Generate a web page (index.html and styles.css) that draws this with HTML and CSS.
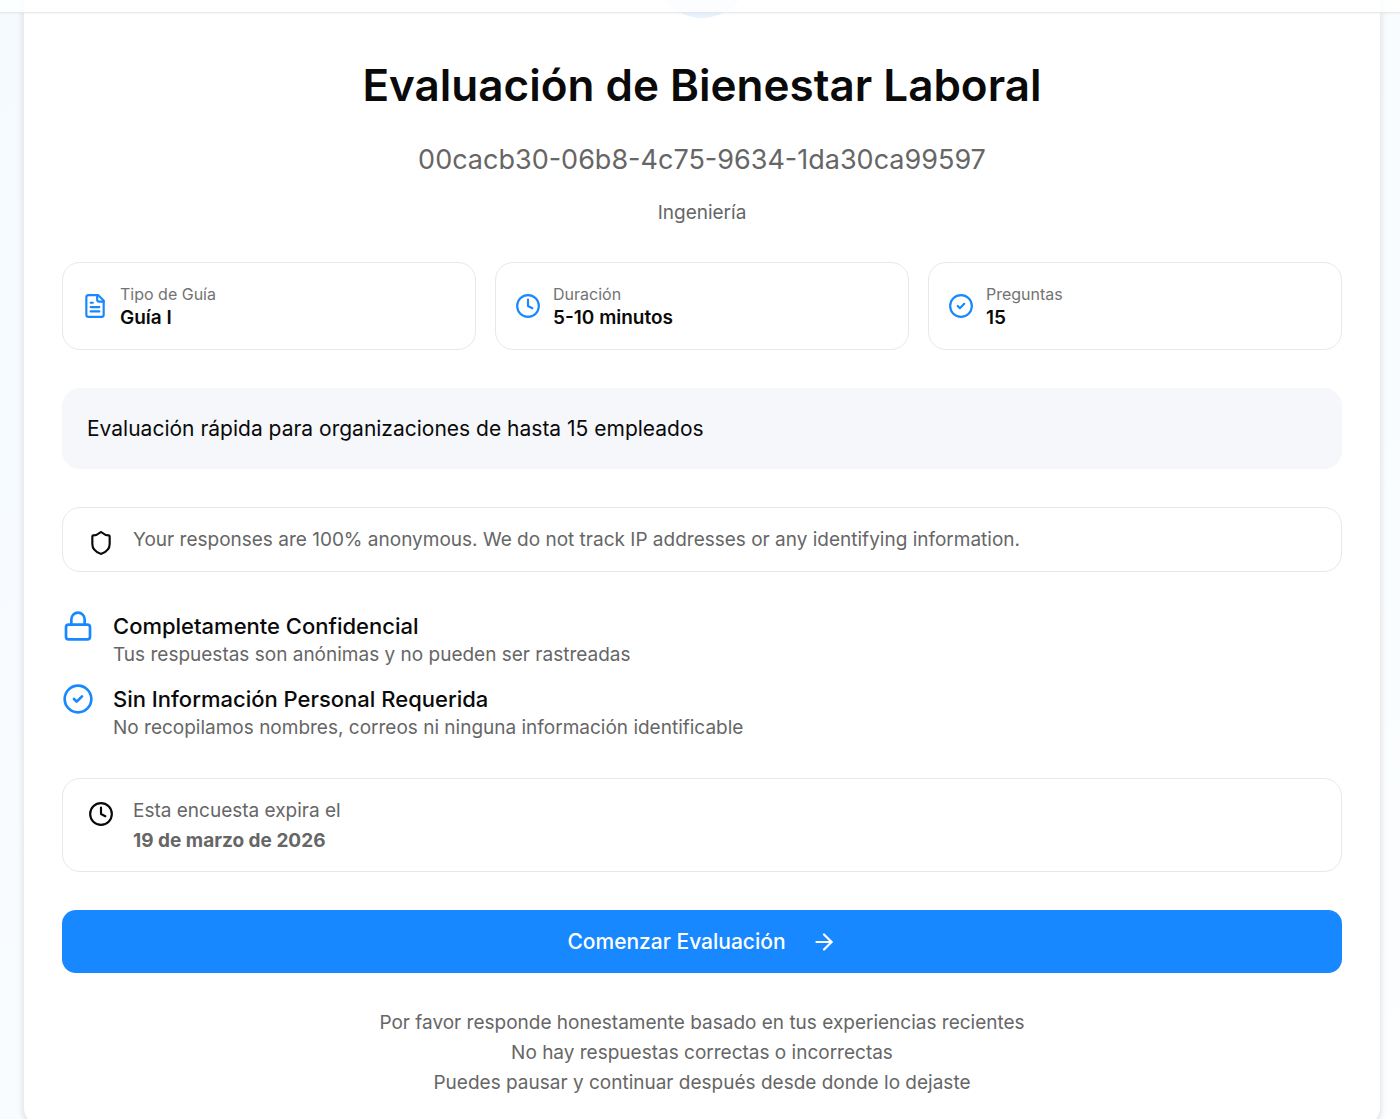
FILE: index.html
```html
<!DOCTYPE html>
<html lang="es">
<head>
    <meta charset="UTF-8">
    <meta name="viewport" content="width=device-width, initial-scale=1.0">
    <title>Evaluación de Bienestar Laboral</title>
    <link rel="stylesheet" href="styles.css">
</head>
<body>

    <header class="topbar"></header>

    <main class="survey-card">
        <div class="intro">
            <div class="intro-badge"></div>
            <h1>Evaluación de Bienestar Laboral</h1>
            <p class="survey-id">00cacb30-06b8-4c75-9634-1da30ca99597</p>
            <p class="department">Ingeniería</p>
        </div>

        <div class="tiles">
            <div class="tile">
                <svg class="icon blue" viewBox="0 0 24 24">
                    <path d="M15 2H6a2 2 0 0 0-2 2v16a2 2 0 0 0 2 2h12a2 2 0 0 0 2-2V7Z"/>
                    <path d="M14 2v4a2 2 0 0 0 2 2h4"/>
                    <path d="M10 9H8"/>
                    <path d="M16 13H8"/>
                    <path d="M16 17H8"/>
                </svg>
                <div>
                    <p class="tile-label">Tipo de Guía</p>
                    <p class="tile-value">Guía I</p>
                </div>
            </div>
            <div class="tile">
                <svg class="icon blue" viewBox="0 0 24 24">
                    <circle cx="12" cy="12" r="10"/>
                    <path d="M12 6v6l4 2"/>
                </svg>
                <div>
                    <p class="tile-label">Duración</p>
                    <p class="tile-value">5-10 minutos</p>
                </div>
            </div>
            <div class="tile">
                <svg class="icon blue" viewBox="0 0 24 24">
                    <circle cx="12" cy="12" r="10"/>
                    <path d="m9 12 2 2 4-4"/>
                </svg>
                <div>
                    <p class="tile-label">Preguntas</p>
                    <p class="tile-value">15</p>
                </div>
            </div>
        </div>

        <p class="description">Evaluación rápida para organizaciones de hasta 15 empleados</p>

        <div class="alert">
            <svg class="icon" viewBox="0 0 24 24">
                <path d="M20 13c0 5-3.5 7.5-7.66 8.95a1 1 0 0 1-.67-.01C7.5 20.5 4 18 4 13V6a1 1 0 0 1 1-1c2 0 4.5-1.2 6.24-2.72a1.17 1.17 0 0 1 1.52 0C14.51 3.81 17 5 19 5a1 1 0 0 1 1 1z"/>
            </svg>
            <p>Your responses are 100% anonymous. We do not track IP addresses or any identifying information.</p>
        </div>

        <ul class="features">
            <li>
                <svg class="icon icon-large blue" viewBox="0 0 24 24">
                    <rect x="3" y="11" width="18" height="11" rx="2"/>
                    <path d="M7 11V7a5 5 0 0 1 10 0v4"/>
                </svg>
                <div>
                    <h2>Completamente Confidencial</h2>
                    <p>Tus respuestas son anónimas y no pueden ser rastreadas</p>
                </div>
            </li>
            <li>
                <svg class="icon icon-large blue" viewBox="0 0 24 24">
                    <circle cx="12" cy="12" r="10"/>
                    <path d="m9 12 2 2 4-4"/>
                </svg>
                <div>
                    <h2>Sin Información Personal Requerida</h2>
                    <p>No recopilamos nombres, correos ni ninguna información identificable</p>
                </div>
            </li>
        </ul>

        <div class="alert">
            <svg class="icon" viewBox="0 0 24 24">
                <circle cx="12" cy="12" r="10"/>
                <path d="M12 6v6l4 2"/>
            </svg>
            <p>Esta encuesta expira el<br><strong>19 de marzo de 2026</strong></p>
        </div>

        <div class="actions">
            <button type="button" class="start-button">
                Comenzar Evaluación
                <svg class="icon" viewBox="0 0 24 24">
                    <path d="M5 12h14"/>
                    <path d="m12 5 7 7-7 7"/>
                </svg>
            </button>
            <div class="notes">
                <p>Por favor responde honestamente basado en tus experiencias recientes</p>
                <p>No hay respuestas correctas o incorrectas</p>
                <p>Puedes pausar y continuar después desde donde lo dejaste</p>
            </div>
        </div>
    </main>

</body>
</html>
```
FILE: styles.css
```css
* {
    box-sizing: border-box;
    margin: 0;
    padding: 0;
}

body {
    font-family: Inter, "Liberation Sans", sans-serif;
    font-size: 19px;
    color: #0a0a0a;
    background: linear-gradient(to bottom right, #f5faff, #fcfeff);
    padding: 0 19px 24px 23px;
    overflow: hidden;
}

.topbar {
    position: fixed;
    top: 0;
    left: 0;
    right: 0;
    z-index: 10;
    height: 13px;
    background-color: rgba(255, 255, 255, 0.8);
    backdrop-filter: blur(24px);
    border-bottom: 1px solid #e8e8e8;
    box-shadow: 0 1px 2px rgba(0, 0, 0, 0.04);
}

/* the top of the card starts behind the bar */
.survey-card {
    display: flex;
    flex-direction: column;
    gap: 38px;
    margin-top: -117px;
    padding: 38px 38px 27px;
    background-color: white;
    border: 1px solid #ececec;
    border-radius: 18px;
    box-shadow: 0 2px 6px rgba(0, 0, 0, 0.12);
}

.intro {
    text-align: center;
}

.intro-badge {
    width: 96px;
    height: 96px;
    margin: 0 auto 38px;
    border-radius: 50%;
    background-color: #e8f3ff;
}

h1 {
    font-size: 44px;
    font-weight: 600;
    line-height: 58px;
}

.survey-id {
    margin-top: 26px;
    font-size: 27px;
    line-height: 40px;
    color: #666;
}

.department {
    margin-top: 22px;
    line-height: 22px;
    color: #666;
}

.icon {
    flex: none;
    width: 26px;
    height: 26px;
    fill: none;
    stroke: currentColor;
    stroke-width: 2;
    stroke-linecap: round;
    stroke-linejoin: round;
}

.icon-large {
    width: 32px;
    height: 32px;
}

.blue {
    color: #1788ff;
}

.tiles {
    display: grid;
    grid-template-columns: repeat(3, 1fr);
    gap: 19px;
}

.tile {
    display: flex;
    align-items: center;
    gap: 12px;
    padding: 19px;
    border: 1px solid #e8e8e8;
    border-radius: 18px;
}

.tile-label {
    font-size: 16px;
    line-height: 24px;
    color: #737373;
}

.tile-value {
    font-weight: 600;
    line-height: 24px;
}

.description {
    padding: 25px;
    font-size: 21px;
    line-height: 31px;
    background-color: #f5f7fb;
    border-radius: 18px;
}

.alert {
    display: flex;
    gap: 19px;
    padding: 17px 25px 15px;
    line-height: 30px;
    color: #666;
    border: 1px solid #e8e8e8;
    border-radius: 18px;
}

.alert .icon {
    margin-top: 5px;
    color: #0a0a0a;
}

.alert strong {
    font-weight: 700;
}

.features {
    display: flex;
    flex-direction: column;
    gap: 16px;
    list-style: none;
}

.features li {
    display: flex;
    gap: 19px;
}

.features h2 {
    font-size: 22px;
    font-weight: 500;
    line-height: 32px;
}

.features p {
    line-height: 25px;
    color: #666;
}

.actions {
    display: flex;
    flex-direction: column;
    gap: 35px;
}

.start-button {
    display: flex;
    align-items: center;
    justify-content: center;
    gap: 25px;
    width: 100%;
    padding: 16px;
    font-family: inherit;
    font-size: 21px;
    font-weight: 500;
    line-height: 31px;
    color: white;
    background-color: #1788ff;
    border: none;
    border-radius: 14px;
    cursor: pointer;
}

.start-button:hover {
    background-color: #0f78e6;
}

.notes {
    text-align: center;
    line-height: 30px;
    color: #666;
}
```
